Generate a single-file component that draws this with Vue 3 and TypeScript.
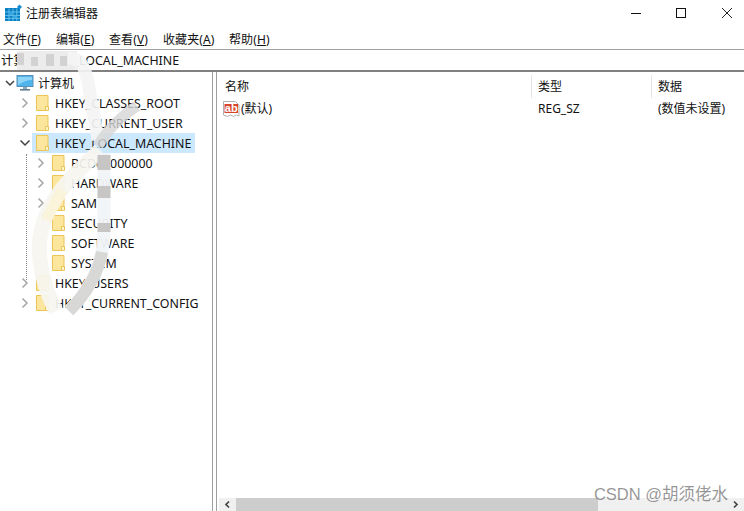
<template>
  <div class="window">
    <div class="titlebar">
      <svg class="app-icon" width="18" height="18" viewBox="0 0 18 18">
        <rect x="1" y="4" width="15" height="13" fill="#0a7fc4" />
        <path d="M5 4.5v12.5M9 4.5v12.5M12.8 4.5v12.5M1 8h15M1 11.4h15M1 14.4h15" stroke="#6cc6ee" stroke-width="0.9" />
        <rect x="5.5" y="8.4" width="3" height="2.6" fill="#37a9e2" />
        <rect x="9.4" y="11.8" width="3" height="2.3" fill="#37a9e2" />
        <path d="M15.5 0.5 18 3l-2.5 2.5L13 3z" fill="#1590d6" />
      </svg>
      <span class="title">注册表编辑器</span>
      <div class="controls">
        <svg width="12" height="12" viewBox="0 0 12 12" class="ctl-min"><path d="M1 6.5h10" stroke="#111" /></svg>
        <svg width="12" height="12" viewBox="0 0 12 12" class="ctl-max"><rect x="1.5" y="1.5" width="9" height="9" fill="none" stroke="#111" /></svg>
        <svg width="12" height="12" viewBox="0 0 12 12" class="ctl-close"><path d="M1 1l10 10M11 1 1 11" stroke="#222" /></svg>
      </div>
    </div>

    <div class="menubar">
      <span v-for="m in menus" :key="m.name" class="menu-item" :style="{ width: m.width + 'px' }">{{ m.name }}(<u>{{ m.key }}</u>)</span>
    </div>

    <div class="address">计算机\HKEY_LOCAL_MACHINE</div>

    <div class="panes">
      <div class="tree">
        <div class="tree-row root-row">
          <svg class="chev" width="10" height="12" viewBox="1 0 10 12"><path d="M2 4 6 8l4-4" fill="none" stroke="#404040" stroke-width="1.5" /></svg>
          <svg class="pc" width="18" height="18" viewBox="0 0 18 18">
            <rect x="1" y="1.5" width="16" height="11" fill="#4fb4ec" stroke="#5c8fb5" />
            <path d="M2 3h14v3C11 6 6 8 2 11z" fill="#8ed4f7" />
            <rect x="7" y="13" width="4" height="2" fill="#8aa4b8" />
            <rect x="4" y="15" width="10" height="1.6" fill="#5f7f99" />
          </svg>
          <span class="label root-label">计算机</span>
        </div>
        <div v-for="row in rows" :key="row.name" class="tree-row" :class="'depth-' + row.depth">
          <div class="row-inner" :class="{ selected: row.selected }">
            <svg v-if="row.open !== undefined" class="chev" width="12" height="12" viewBox="0 0 12 12">
              <path v-if="row.open" d="M1.5 3.5 6 8l4.5-4.5" fill="none" stroke="#404040" stroke-width="1.5" />
              <path v-else d="M3.5 1.5 8 6l-4.5 4.5" fill="none" stroke="#a6a6a6" stroke-width="1.5" />
            </svg>
            <span v-else class="chev-space"></span>
            <svg class="folder" width="13" height="16" viewBox="0 0 13 16">
              <path d="M.5.5h11.5v11.5h-1v3.5H.5z" fill="#fce59d" stroke="#eac558" />
              <path d="M9.5 11.5h3v4h-3z" fill="#fff3c9" stroke="#eac558" />
            </svg>
            <span class="label">{{ row.name }}</span>
          </div>
        </div>
        <i class="dots dots-a"></i>
        <i class="dots dots-b"></i>
      </div>

      <div class="list">
        <div class="list-head">
          <div class="col col-name">名称</div>
          <div class="col col-type">类型</div>
          <div class="col col-data">数据</div>
        </div>
        <div class="list-row">
          <div class="col col-name value-name">
            <svg width="17" height="17" viewBox="0 0 17 17">
              <path d="M.5.5h12l3.5 3.5v11l-2.5-1-3 1.5-3-1.5-3 1.5-4-1.5z" fill="#fff" stroke="#b0b0b0" />
              <rect x="1.5" y="3" width="13.5" height="9" fill="#d8452c" />
              <text x="8.2" y="11" class="ab">ab</text>
            </svg>
            <span>(默认)</span>
          </div>
          <div class="col col-type">REG_SZ</div>
          <div class="col col-data">(数值未设置)</div>
        </div>
        <div class="list-fill"></div>
        <div class="hscroll">
          <svg width="9" height="9" viewBox="0 0 9 9" class="arrow"><path d="M6 1.5 3 4.5l3 3" fill="none" stroke="#444" stroke-width="1.7" /></svg>
          <div class="thumb"></div>
          <svg width="9" height="9" viewBox="0 0 9 9" class="arrow arrow-r"><path d="M3 1.5l3 3-3 3" fill="none" stroke="#444" stroke-width="1.7" /></svg>
        </div>
      </div>
    </div>

    <!-- watermark and redaction smears sit on top of the window -->
    <svg class="smear" width="744" height="511" viewBox="0 0 744 511">
      <rect x="17" y="51" width="60" height="19" fill="#ececec" />
      <g fill="#d2d2d2">
        <rect x="17" y="53" width="7" height="12" /><rect x="31" y="57" width="7" height="9" /><rect x="46" y="54" width="8" height="12" /><rect x="60" y="56" width="7" height="10" />
      </g>
      <path d="M68 58C80 58 84 64 88 82L98 140" fill="none" stroke="#f4f4f4" stroke-width="13" opacity="0.92" />
      <path d="M137 106C122 116 108 128 98 146" fill="none" stroke="#d6d6d6" stroke-width="11" opacity="0.8" />
      <path d="M100 150C88 162 76 172 67 183C54 198 43 215 40 238C37 260 44 288 56 311" fill="none" stroke="#f6f5f0" stroke-width="15" opacity="0.93" />
      <path d="M62 190 46 220" fill="none" stroke="#fdf3cf" stroke-width="11" opacity="0.6" />
      <path d="M104 153V232C104 262 90 290 69 311" fill="none" stroke="#f1f4f8" stroke-width="13" opacity="0.95" />
      <path d="M104 155V232" fill="none" stroke="#c8c6c4" stroke-width="13" stroke-dasharray="15 16 12 25 12 40" />
      <path d="M102 252C99 268 90 290 69 311" fill="none" stroke="#d4d2d0" stroke-width="12" opacity="0.85" />
    </svg>
    <div class="watermark">CSDN @胡须佬水</div>
  </div>
</template>

<script setup lang="ts">
interface TreeRow {
  name: string;
  depth: number;
  open?: boolean;
  selected?: boolean;
}

const menus = [
  { name: '文件', key: 'F', width: 53 },
  { name: '编辑', key: 'E', width: 53 },
  { name: '查看', key: 'V', width: 54 },
  { name: '收藏夹', key: 'A', width: 66 },
  { name: '帮助', key: 'H', width: 50 },
];

const rows: TreeRow[] = [
  { name: 'HKEY_CLASSES_ROOT', depth: 1, open: false },
  { name: 'HKEY_CURRENT_USER', depth: 1, open: false },
  { name: 'HKEY_LOCAL_MACHINE', depth: 1, open: true, selected: true },
  { name: 'BCD00000000', depth: 2, open: false },
  { name: 'HARDWARE', depth: 2, open: false },
  { name: 'SAM', depth: 2, open: false },
  { name: 'SECURITY', depth: 2 },
  { name: 'SOFTWARE', depth: 2 },
  { name: 'SYSTEM', depth: 2 },
  { name: 'HKEY_USERS', depth: 1, open: false },
  { name: 'HKEY_CURRENT_CONFIG', depth: 1, open: false },
];
</script>

<style>
html,
body {
  margin: 0;
  background: #fff;
  overflow: hidden;
}
</style>

<style scoped>
.window {
  position: relative;
  width: 744px;
  height: 511px;
  display: flex;
  flex-direction: column;
  background: #fff;
  color: #111;
  font-family: "Noto Sans", "Noto Sans CJK SC", sans-serif;
  font-size: 12px;
  overflow: hidden;
}

.titlebar {
  height: 28px;
  display: flex;
  align-items: center;
  padding-left: 4px;
  box-sizing: border-box;
}

.app-icon {
  margin-right: 4px;
  margin-top: -3px;
}

.title {
  margin-top: -3px;
}

.controls {
  margin-left: auto;
  display: flex;
  margin-top: -3px;
  padding-right: 11px;
}

.ctl-min {
  margin-right: 33px;
}

.ctl-max {
  margin-right: 34px;
}

.menubar {
  height: 21px;
  display: flex;
  align-items: center;
  padding-left: 3px;
  box-sizing: border-box;
}

.menu-item {
  letter-spacing: 0.1px;
}

.address {
  height: 23px;
  border-top: 1px solid #a0a0a0;
  border-bottom: 2px solid #808080;
  box-sizing: border-box;
  padding-left: 1px;
  font-size: 12.4px;
  line-height: 21px;
  white-space: nowrap;
}

.panes {
  flex: 1;
  display: flex;
  min-height: 0;
}

.tree {
  position: relative;
  width: 212px;
  padding-top: 1px;
  box-sizing: border-box;
}

.tree-row {
  height: 20px;
  display: flex;
  align-items: center;
}

.label {
  font-size: 12.4px;
}

.root-label {
  font-size: 12px;
}

.root-row {
  padding-left: 5px;
}

.root-row .pc {
  margin-left: 1px;
  margin-right: 4px;
}

.row-inner {
  height: 20px;
  display: flex;
  align-items: center;
  padding-right: 4px;
}

.depth-1 {
  padding-left: 19px;
}

.depth-2 {
  padding-left: 35px;
}

.chev {
  flex: none;
}

.chev-space {
  width: 12px;
  flex: none;
}

.folder {
  margin-left: 5px;
  margin-right: 6px;
  flex: none;
}

.selected {
  background: #cce8ff;
  margin-left: 13px;
  padding-left: 0;
  position: relative;
}

.selected .chev {
  margin-left: -13px;
  margin-right: 0;
}

.selected .folder {
  margin-left: 5px;
}

.dots {
  position: absolute;
  width: 0;
  border-left: 1px dotted #8a8a8a;
}

.dots-a {
  left: 26px;
  top: 82px;
  height: 126px;
}

.dots-b {
  left: 42px;
  top: 142px;
  height: 8px;
}

.list {
  flex: 1;
  min-width: 0;
  display: flex;
  flex-direction: column;
  border-left: 1px solid #a0a0a0;
  position: relative;
}

.list::before {
  content: "";
  position: absolute;
  left: 3px;
  top: 0;
  bottom: 0;
  border-left: 1px solid #a0a0a0;
}

.list-head,
.list-row {
  display: flex;
  padding-left: 5px;
}

.list-head {
  height: 26px;
  padding-top: 3px;
  box-sizing: border-box;
}

.list-head .col {
  height: 23px;
  line-height: 23px;
  border-right: 1px solid #e5e5e5;
  box-sizing: border-box;
}

.list-head .col-name {
  padding-left: 7px;
}

.list-row {
  height: 20px;
  line-height: 20px;
  padding-top: 1px;
}

.col {
  flex: none;
  padding-left: 6px;
  box-sizing: border-box;
  white-space: nowrap;
}

.col-name {
  width: 314px;
}

.col-type {
  width: 120px;
}

.col-data {
  width: 93px;
}

.value-name {
  display: flex;
  align-items: center;
  gap: 1px;
  padding-left: 5px;
}

.ab {
  font-family: "Liberation Sans", sans-serif;
  font-size: 11px;
  font-weight: 700;
  fill: #fff;
  text-anchor: middle;
}

.list-fill {
  flex: 1;
}

.hscroll {
  height: 13px;
  margin-left: 6px;
  display: flex;
  align-items: center;
  background: #f0f0f0;
}

.arrow {
  flex: none;
  margin: 0 4px;
}

.thumb {
  width: 362px;
  height: 13px;
  background: #cdcdcd;
}

.arrow-r {
  margin-left: auto;
}

.smear {
  position: absolute;
  left: 0;
  top: 0;
  pointer-events: none;
}

.watermark {
  position: absolute;
  right: 16px;
  top: 481px;
  font-family: "Liberation Sans", "Noto Sans CJK SC", sans-serif;
  font-size: 16.5px;
  color: rgba(110, 110, 110, 0.72);
}
</style>
